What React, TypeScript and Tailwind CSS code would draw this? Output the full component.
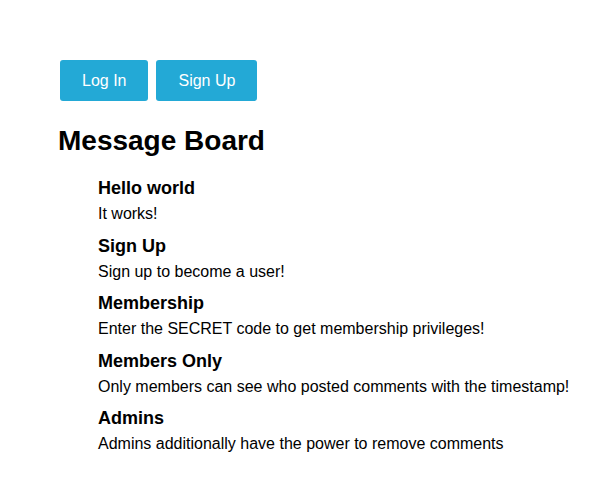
import React from 'react';

const items = [
  { title: 'Hello world', body: 'It works!' },
  { title: 'Sign Up', body: 'Sign up to become a user!' },
  { title: 'Membership', body: 'Enter the SECRET code to get membership privileges!' },
  { title: 'Members Only', body: 'Only members can see who posted comments with the timestamp!' },
  { title: 'Admins', body: 'Admins additionally have the power to remove comments' },
];

export default function App() {
  return (
    <div className="min-h-screen bg-white pl-[60px] pt-[60px] text-black" style={{ fontFamily: '"Liberation Sans", Arial, sans-serif' }}>
      <div className="flex gap-2">
        <button className="h-[41px] rounded-[3px] bg-[#23a9d6] px-[22px] text-[16px] text-white">Log In</button>
        <button className="h-[41px] rounded-[3px] bg-[#23a9d6] px-[22px] text-[16px] text-white">Sign Up</button>
      </div>
      <h1 className="mt-[24px] -ml-[2px] text-[28px] font-bold leading-[32px]">Message Board</h1>
      <div className="mt-[21px] flex flex-col gap-[12.5px] pl-[38px]">
        {items.map((item) => (
          <div key={item.title}>
            <h3 className="text-[18px] font-bold leading-[21px]">{item.title}</h3>
            <p className="mt-[6px] text-[16px] leading-[18px]">{item.body}</p>
          </div>
        ))}
      </div>
    </div>
  );
}
